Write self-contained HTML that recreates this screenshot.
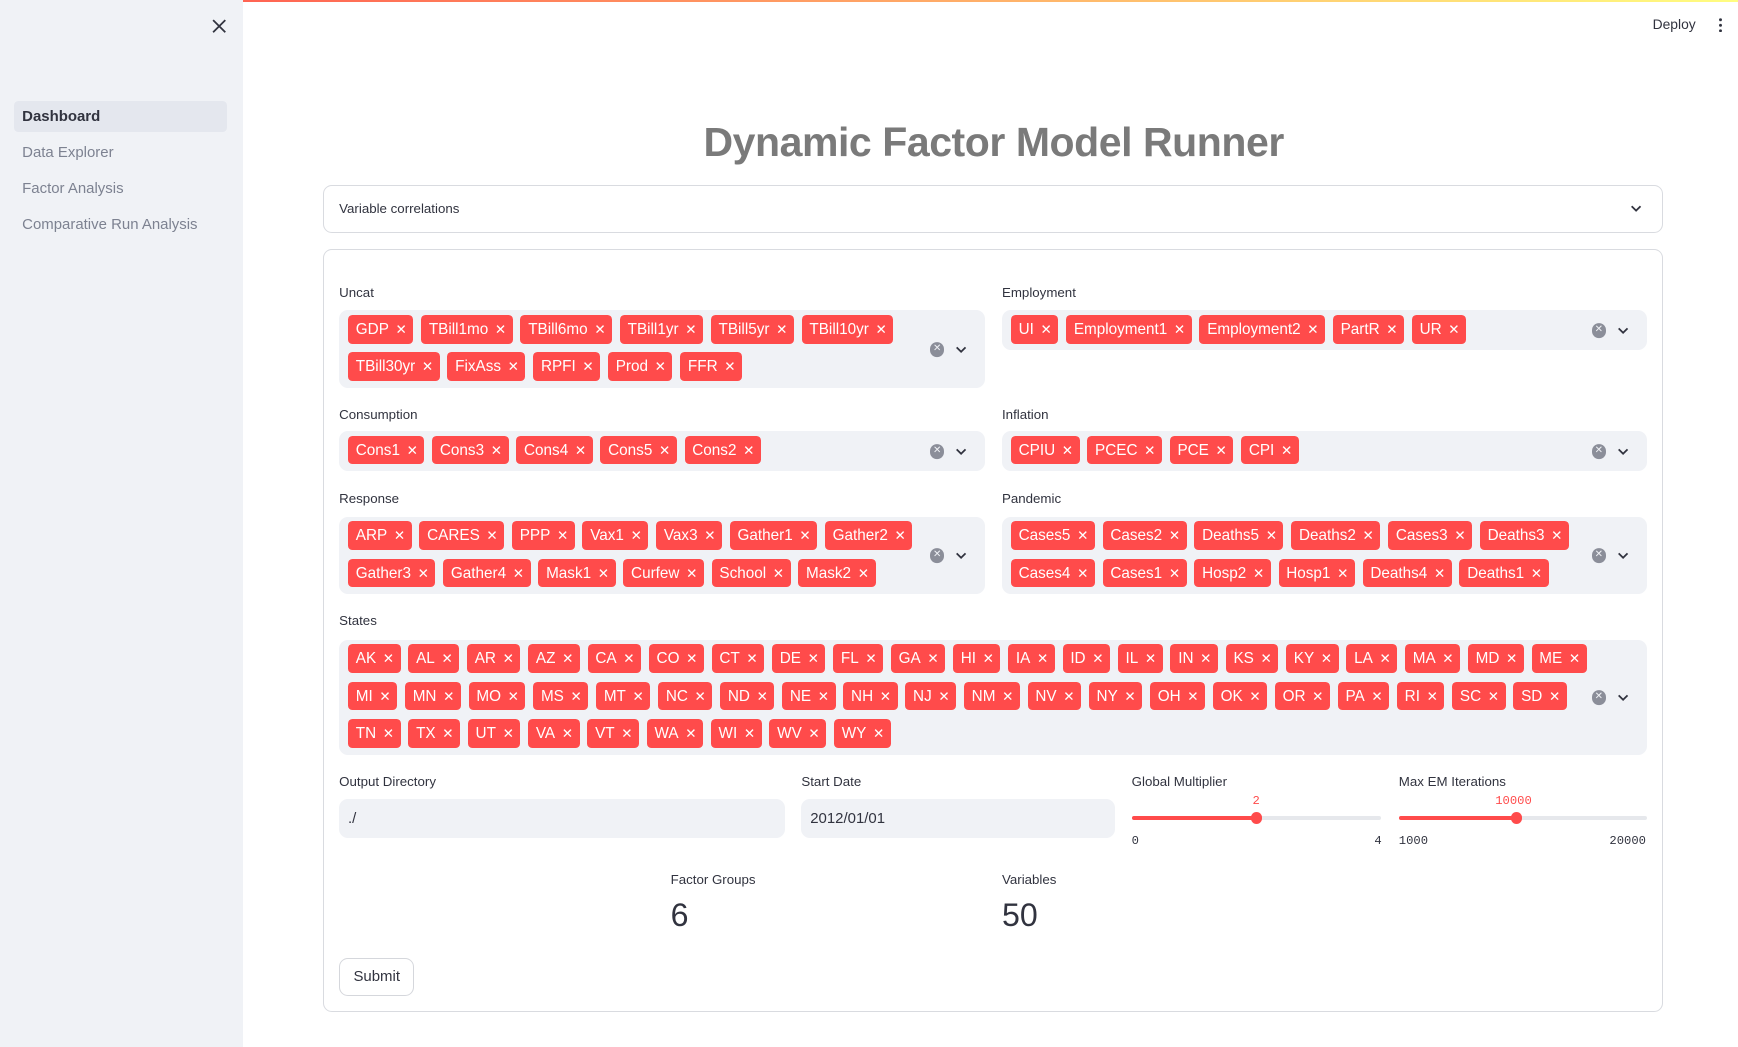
<!DOCTYPE html>
<html><head><meta charset="utf-8"><style>
html,body{margin:0;padding:0;}
body{width:1568px;height:945px;zoom:1.1084;overflow:hidden;font-family:"Liberation Sans",sans-serif;background:#fff;color:#31333f;position:relative;}
.top{position:absolute;left:0;top:0;width:1568px;height:2px;background:linear-gradient(90deg,#ff4b4b,#fffd80);}
.side{position:absolute;left:0;top:0;width:219px;height:945px;background:#f0f2f6;}
.nav{position:absolute;left:13px;width:192px;height:28px;line-height:28px;padding-left:7px;box-sizing:border-box;font-size:13.5px;color:#7d8291;border-radius:4px;}
.abs{position:absolute;}
.lbl{position:absolute;font-size:12px;color:#31333f;}
.ms{position:absolute;background:#f0f2f6;border-radius:8px;box-sizing:border-box;padding:4px 0 4px 8px;}
.row{display:flex;gap:7px;white-space:nowrap;margin-bottom:8px;}
.row:last-of-type{margin-bottom:0}
.tag{height:26px;line-height:27px;background:#ff4b4b;color:#fff;font-size:13.8px;border-radius:4px;padding:0 6px 0 7px;white-space:nowrap;}
.tag i{font-style:normal;font-size:12px;margin-left:6px;}
.icons{position:absolute;right:10px;top:50%;transform:translateY(-50%);width:40px;height:16px;}
.clr{position:absolute;left:0;top:2px;width:13px;height:13px;border-radius:50%;background:#8b8e99;color:#f0f2f6;font-size:9px;line-height:13px;text-align:center;}
.inp{position:absolute;background:#f0f2f6;border-radius:8px;font-size:13.5px;line-height:36px;padding-left:8px;box-sizing:border-box;height:35px;}
.mono{font-family:"Liberation Mono",monospace;font-size:11px;position:absolute;}
</style></head><body>
<div class="top"></div>
<div class="side">
<svg class="abs" style="left:191px;top:17px" width="13" height="13" viewBox="0 0 13 13"><path d="M1 1L12 12M12 1L1 12" stroke="#31333f" stroke-width="1.6"/></svg>
<div class="nav" style="top:91px;background:#e4e7ee;color:#31333f;font-weight:bold;">Dashboard</div>
<div class="nav" style="top:124px">Data Explorer</div>
<div class="nav" style="top:156px">Factor Analysis</div>
<div class="nav" style="top:189px">Comparative Run Analysis</div>
</div>
<div class="abs" style="left:1491px;top:14px;font-size:12.5px">Deploy</div>
<div class="abs" style="left:1551px;top:15px;width:3px;height:14px;background:radial-gradient(circle,#31333f 1.3px,transparent 1.5px) 0 0/3px 5px repeat-y"></div>
<div class="abs" style="left:292px;width:1209px;top:107px;text-align:center;font-size:37px;font-weight:bold;color:#7a7a7a;letter-spacing:-0.4px">Dynamic Factor Model Runner</div>
<div class="abs" style="left:291px;top:167px;width:1208px;height:41px;border:1px solid #d9dbe0;border-radius:8px;"></div>
<div class="abs" style="left:306px;top:181px;font-size:12px">Variable correlations</div>
<svg class="abs" style="left:1471px;top:184px" width="11" height="8" viewBox="0 0 11 8"><path d="M1.5 2L5.5 6L9.5 2" stroke="#31333f" stroke-width="1.6" fill="none"/></svg>
<div class="abs" style="left:291px;top:225px;width:1208px;height:686px;border:1px solid #d9dbe0;border-radius:8px;"></div>

<div class="lbl" style="left:306px;top:257px">Uncat</div>
<div class="ms" style="left:306px;top:280px;width:583px;height:70px">
<div class="row"><span class="tag">GDP<i>✕</i></span><span class="tag">TBill1mo<i>✕</i></span><span class="tag">TBill6mo<i>✕</i></span><span class="tag">TBill1yr<i>✕</i></span><span class="tag">TBill5yr<i>✕</i></span><span class="tag">TBill10yr<i>✕</i></span></div>
<div class="row"><span class="tag">TBill30yr<i>✕</i></span><span class="tag">FixAss<i>✕</i></span><span class="tag">RPFI<i>✕</i></span><span class="tag">Prod<i>✕</i></span><span class="tag">FFR<i>✕</i></span></div>
<div class="icons"><div class="clr">✕</div><svg class="abs" style="left:23px;top:4px" width="11" height="8"><path d="M1.5 2L5.5 6L9.5 2" stroke="#31333f" stroke-width="1.6" fill="none"/></svg></div></div>

<div class="lbl" style="left:904px;top:257px">Employment</div>
<div class="ms" style="left:904px;top:280px;width:582px;height:36px">
<div class="row"><span class="tag">UI<i>✕</i></span><span class="tag">Employment1<i>✕</i></span><span class="tag">Employment2<i>✕</i></span><span class="tag">PartR<i>✕</i></span><span class="tag">UR<i>✕</i></span></div>
<div class="icons"><div class="clr">✕</div><svg class="abs" style="left:23px;top:4px" width="11" height="8"><path d="M1.5 2L5.5 6L9.5 2" stroke="#31333f" stroke-width="1.6" fill="none"/></svg></div></div>

<div class="lbl" style="left:306px;top:367px">Consumption</div>
<div class="ms" style="left:306px;top:389px;width:583px;height:36px">
<div class="row"><span class="tag">Cons1<i>✕</i></span><span class="tag">Cons3<i>✕</i></span><span class="tag">Cons4<i>✕</i></span><span class="tag">Cons5<i>✕</i></span><span class="tag">Cons2<i>✕</i></span></div>
<div class="icons"><div class="clr">✕</div><svg class="abs" style="left:23px;top:4px" width="11" height="8"><path d="M1.5 2L5.5 6L9.5 2" stroke="#31333f" stroke-width="1.6" fill="none"/></svg></div></div>

<div class="lbl" style="left:904px;top:367px">Inflation</div>
<div class="ms" style="left:904px;top:389px;width:582px;height:36px">
<div class="row"><span class="tag">CPIU<i>✕</i></span><span class="tag">PCEC<i>✕</i></span><span class="tag">PCE<i>✕</i></span><span class="tag">CPI<i>✕</i></span></div>
<div class="icons"><div class="clr">✕</div><svg class="abs" style="left:23px;top:4px" width="11" height="8"><path d="M1.5 2L5.5 6L9.5 2" stroke="#31333f" stroke-width="1.6" fill="none"/></svg></div></div>

<div class="lbl" style="left:306px;top:443px">Response</div>
<div class="ms" style="left:306px;top:466px;width:583px;height:70px">
<div class="row"><span class="tag">ARP<i>✕</i></span><span class="tag">CARES<i>✕</i></span><span class="tag">PPP<i>✕</i></span><span class="tag">Vax1<i>✕</i></span><span class="tag">Vax3<i>✕</i></span><span class="tag">Gather1<i>✕</i></span><span class="tag">Gather2<i>✕</i></span></div>
<div class="row"><span class="tag">Gather3<i>✕</i></span><span class="tag">Gather4<i>✕</i></span><span class="tag">Mask1<i>✕</i></span><span class="tag">Curfew<i>✕</i></span><span class="tag">School<i>✕</i></span><span class="tag">Mask2<i>✕</i></span></div>
<div class="icons"><div class="clr">✕</div><svg class="abs" style="left:23px;top:4px" width="11" height="8"><path d="M1.5 2L5.5 6L9.5 2" stroke="#31333f" stroke-width="1.6" fill="none"/></svg></div></div>

<div class="lbl" style="left:904px;top:443px">Pandemic</div>
<div class="ms" style="left:904px;top:466px;width:582px;height:70px">
<div class="row"><span class="tag">Cases5<i>✕</i></span><span class="tag">Cases2<i>✕</i></span><span class="tag">Deaths5<i>✕</i></span><span class="tag">Deaths2<i>✕</i></span><span class="tag">Cases3<i>✕</i></span><span class="tag">Deaths3<i>✕</i></span></div>
<div class="row"><span class="tag">Cases4<i>✕</i></span><span class="tag">Cases1<i>✕</i></span><span class="tag">Hosp2<i>✕</i></span><span class="tag">Hosp1<i>✕</i></span><span class="tag">Deaths4<i>✕</i></span><span class="tag">Deaths1<i>✕</i></span></div>
<div class="icons"><div class="clr">✕</div><svg class="abs" style="left:23px;top:4px" width="11" height="8"><path d="M1.5 2L5.5 6L9.5 2" stroke="#31333f" stroke-width="1.6" fill="none"/></svg></div></div>

<div class="lbl" style="left:306px;top:553px">States</div>
<div class="ms" style="left:306px;top:577px;width:1180px;height:104px">
<div class="row"><span class="tag">AK<i>✕</i></span><span class="tag">AL<i>✕</i></span><span class="tag">AR<i>✕</i></span><span class="tag">AZ<i>✕</i></span><span class="tag">CA<i>✕</i></span><span class="tag">CO<i>✕</i></span><span class="tag">CT<i>✕</i></span><span class="tag">DE<i>✕</i></span><span class="tag">FL<i>✕</i></span><span class="tag">GA<i>✕</i></span><span class="tag">HI<i>✕</i></span><span class="tag">IA<i>✕</i></span><span class="tag">ID<i>✕</i></span><span class="tag">IL<i>✕</i></span><span class="tag">IN<i>✕</i></span><span class="tag">KS<i>✕</i></span><span class="tag">KY<i>✕</i></span><span class="tag">LA<i>✕</i></span><span class="tag">MA<i>✕</i></span><span class="tag">MD<i>✕</i></span><span class="tag">ME<i>✕</i></span></div>
<div class="row"><span class="tag">MI<i>✕</i></span><span class="tag">MN<i>✕</i></span><span class="tag">MO<i>✕</i></span><span class="tag">MS<i>✕</i></span><span class="tag">MT<i>✕</i></span><span class="tag">NC<i>✕</i></span><span class="tag">ND<i>✕</i></span><span class="tag">NE<i>✕</i></span><span class="tag">NH<i>✕</i></span><span class="tag">NJ<i>✕</i></span><span class="tag">NM<i>✕</i></span><span class="tag">NV<i>✕</i></span><span class="tag">NY<i>✕</i></span><span class="tag">OH<i>✕</i></span><span class="tag">OK<i>✕</i></span><span class="tag">OR<i>✕</i></span><span class="tag">PA<i>✕</i></span><span class="tag">RI<i>✕</i></span><span class="tag">SC<i>✕</i></span><span class="tag">SD<i>✕</i></span></div>
<div class="row"><span class="tag">TN<i>✕</i></span><span class="tag">TX<i>✕</i></span><span class="tag">UT<i>✕</i></span><span class="tag">VA<i>✕</i></span><span class="tag">VT<i>✕</i></span><span class="tag">WA<i>✕</i></span><span class="tag">WI<i>✕</i></span><span class="tag">WV<i>✕</i></span><span class="tag">WY<i>✕</i></span></div>
<div class="icons"><div class="clr">✕</div><svg class="abs" style="left:23px;top:4px" width="11" height="8"><path d="M1.5 2L5.5 6L9.5 2" stroke="#31333f" stroke-width="1.6" fill="none"/></svg></div></div>

<div class="lbl" style="left:306px;top:698px">Output Directory</div>
<div class="inp" style="left:306px;top:721px;width:402px">./</div>
<div class="lbl" style="left:723px;top:698px">Start Date</div>
<div class="inp" style="left:723px;top:721px;width:283px">2012/01/01</div>

<div class="lbl" style="left:1021px;top:698px">Global Multiplier</div>
<div class="mono" style="left:1130px;top:716px;color:#ff4b4b">2</div>
<div class="abs" style="left:1021px;top:736px;width:225px;height:4px;background:#e6e8ec;border-radius:2px"></div>
<div class="abs" style="left:1021px;top:736px;width:113px;height:4px;background:#ff4b4b;border-radius:2px"></div>
<div class="abs" style="left:1129px;top:733px;width:10px;height:10px;background:#ff4b4b;border-radius:50%"></div>
<div class="mono" style="left:1021px;top:752px">0</div>
<div class="mono" style="left:1240px;top:752px">4</div>

<div class="lbl" style="left:1262px;top:698px">Max EM Iterations</div>
<div class="mono" style="left:1349px;top:716px;color:#ff4b4b">10000</div>
<div class="abs" style="left:1262px;top:736px;width:224px;height:4px;background:#e6e8ec;border-radius:2px"></div>
<div class="abs" style="left:1262px;top:736px;width:106px;height:4px;background:#ff4b4b;border-radius:2px"></div>
<div class="abs" style="left:1363px;top:733px;width:10px;height:10px;background:#ff4b4b;border-radius:50%"></div>
<div class="mono" style="left:1262px;top:752px">1000</div>
<div class="mono" style="left:1452px;top:752px">20000</div>

<div class="lbl" style="left:605px;top:787px">Factor Groups</div>
<div class="abs" style="left:605px;top:809px;font-size:29px">6</div>
<div class="lbl" style="left:904px;top:787px">Variables</div>
<div class="abs" style="left:904px;top:809px;font-size:29px">50</div>

<div class="abs" style="left:306px;top:864px;width:66px;height:33px;border:1px solid #d5d7dc;border-radius:8px;font-size:13.5px;line-height:33px;text-align:center">Submit</div>
</body></html>
